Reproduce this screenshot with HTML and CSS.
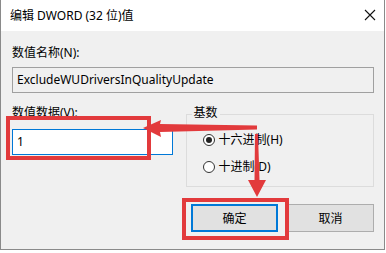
FILE: index.html
```html
<!DOCTYPE html>
<html lang="zh-CN">
<head>
<meta charset="utf-8">
<title>编辑 DWORD (32 位)值</title>
<link rel="stylesheet" href="styles.css">
</head>
<body>
<div class="window">
  <div class="titlebar">
    <span class="title">编辑 DWORD (32 位)值</span>
    <svg class="close" width="12" height="12" viewBox="0 0 12 12"><path d="M1 1L11 11M11 1L1 11" stroke="#111" stroke-width="1.1" fill="none"/></svg>
  </div>
  <div class="content">
    <div class="label">数值名称(N):</div>
    <div class="namebox">ExcludeWUDriversInQualityUpdate</div>
    <div class="row">
      <div class="leftcol">
        <div class="label label2">数值数据(V):</div>
        <div class="valuebox">1</div>
      </div>
      <div class="group">
        <div class="group-title">基数</div>
        <div class="radios">
          <div class="radio"><span class="dot checked"></span><span>十六进制(H)</span></div>
          <div class="radio"><span class="dot"></span><span>十进制(D)</span></div>
        </div>
      </div>
    </div>
    <div class="buttons">
      <div class="btn default">确定</div>
      <div class="btn">取消</div>
    </div>
  </div>
</div>
<svg class="overlay" width="386" height="253" viewBox="0 0 386 253">
  <rect x="8" y="118" width="141" height="40" fill="none" stroke="#e23a3c" stroke-width="4"/>
  <rect x="184" y="200" width="103" height="38" fill="none" stroke="#e23a3c" stroke-width="4"/>
  <polygon points="143,128 161,120 160,124 257,125.5 257,129.5 160,132 161,137" fill="#e23a3c"/>
  <polygon points="255,134 258,134 259.5,180 266,180 257,197 248,180 254.5,180" fill="#e23a3c"/>
</svg>
</body>
</html>
```
FILE: styles.css
```css
html, body {
  margin: 0;
  padding: 0;
  background: #ffffff;
}
body {
  width: 386px;
  height: 253px;
  overflow: hidden;
  position: relative;
  font-family: "Noto Sans", "Noto Sans CJK SC", sans-serif;
  font-size: 12px;
  color: #000;
}
.window {
  width: 383px;
  height: 249px;
  border: 1px solid #8a8a8a;
  border-top: none;
  display: flex;
  flex-direction: column;
  background: #f0f0f0;
}
.titlebar {
  height: 31px;
  background: #ffffff;
  display: flex;
  align-items: center;
  justify-content: space-between;
  padding: 0 8px 0 9px;
  flex-shrink: 0;
}
.title {
  font-size: 12px;
  line-height: 16px;
}
.close {
  display: block;
  margin-top: -1px;
}
.content {
  padding: 14px 10px 0 11px;
  display: flex;
  flex-direction: column;
}
.label {
  line-height: 16px;
  height: 16px;
}
.namebox {
  margin-top: 6px;
  height: 24px;
  border: 1px solid #a0a0a0;
  background: #f0f0f0;
  line-height: 24px;
  padding-left: 4px;
}
.row {
  display: flex;
  gap: 13px;
  align-items: flex-start;
}
.leftcol {
  width: 161px;
  display: flex;
  flex-direction: column;
}
.label2 {
  margin-top: 12px;
}
.valuebox {
  margin-top: 8px;
  height: 24px;
  border: 1px solid #0078d7;
  background: #ffffff;
  line-height: 24px;
  padding-left: 4px;
}
.group {
  margin-top: 21px;
  width: 187px;
  border: 1px solid #dcdcdc;
  display: flex;
  flex-direction: column;
  padding-bottom: 11px;
}
.group-title {
  width: fit-content;
  margin-top: -10px;
  margin-left: 5px;
  padding: 0 2px;
  line-height: 16px;
  background: #f0f0f0;
}
.radios {
  margin-top: 11px;
  display: flex;
  flex-direction: column;
  gap: 11px;
  padding-left: 16px;
}
.radio {
  display: flex;
  align-items: center;
  line-height: 16px;
  height: 16px;
  gap: 4px;
}
.dot {
  width: 11px;
  height: 11px;
  border: 1px solid #333;
  border-radius: 50%;
  box-sizing: border-box;
  width: 12px;
  height: 12px;
  display: flex;
  align-items: center;
  justify-content: center;
  background: #fff;
}
.dot.checked::after {
  content: "";
  width: 6px;
  height: 6px;
  border-radius: 50%;
  background: #222;
}
.buttons {
  margin-top: 17px;
  display: flex;
  justify-content: flex-end;
  gap: 9px;
}
.btn {
  width: 85px;
  height: 26px;
  border: 1px solid #adadad;
  background: #e1e1e1;
  display: flex;
  align-items: center;
  justify-content: center;
}
.btn.default {
  width: 83px;
  height: 24px;
  border: 2px solid #0078d7;
}
.overlay {
  position: absolute;
  left: 0;
  top: 0;
  pointer-events: none;
}
```
